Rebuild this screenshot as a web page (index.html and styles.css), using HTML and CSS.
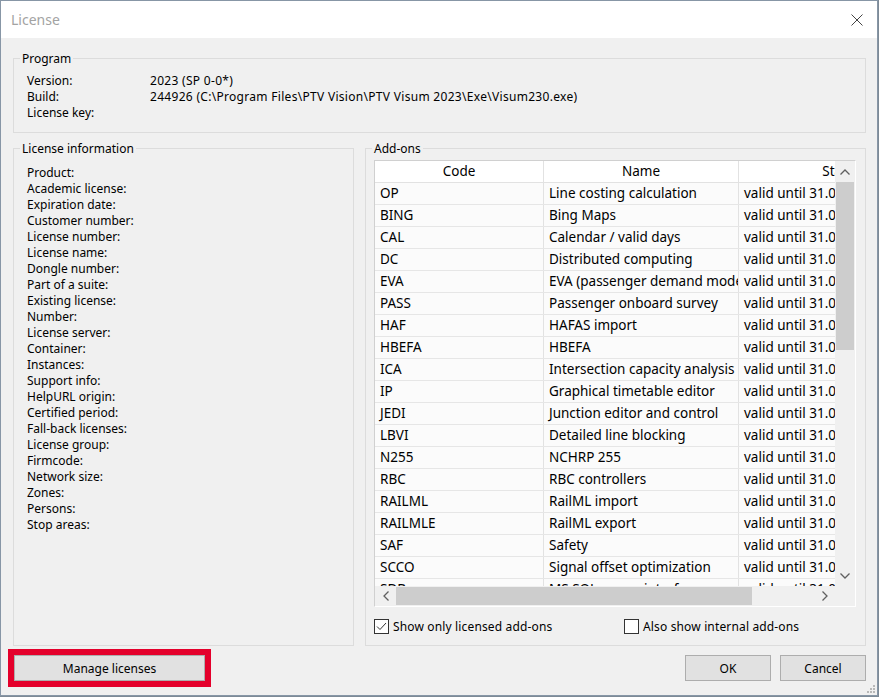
FILE: index.html
```html
<!DOCTYPE html>
<html lang="en">
<head>
<meta charset="utf-8">
<title>License</title>
<link rel="stylesheet" href="styles.css">
</head>
<body>
<div class="window">
  <div class="titlebar">
    <span class="title">License</span>
    <svg class="close" width="12" height="12" viewBox="0 0 12 12"><path d="M0.5 0.5 L11.5 11.5 M11.5 0.5 L0.5 11.5" stroke="#444" stroke-width="1" fill="none"/></svg>
  </div>
  <div class="content">
    <fieldset class="group program">
      <legend>Program</legend>
      <div class="group-body program-body">
        <span>Version:</span><span class="val">2023 (SP 0-0*)</span>
        <span>Build:</span><span class="val">244926 (C:\Program Files\PTV Vision\PTV Visum 2023\Exe\Visum230.exe)</span>
        <span>License key:</span><span class="val"></span>
      </div>
    </fieldset>
    <div class="middle">
      <fieldset class="group info">
        <legend>License information</legend>
        <div class="group-body info-body">
          <span>Product:</span>
          <span>Academic license:</span>
          <span>Expiration date:</span>
          <span>Customer number:</span>
          <span>License number:</span>
          <span>License name:</span>
          <span>Dongle number:</span>
          <span>Part of a suite:</span>
          <span>Existing license:</span>
          <span>Number:</span>
          <span>License server:</span>
          <span>Container:</span>
          <span>Instances:</span>
          <span>Support info:</span>
          <span>HelpURL origin:</span>
          <span>Certified period:</span>
          <span>Fall-back licenses:</span>
          <span>License group:</span>
          <span>Firmcode:</span>
          <span>Network size:</span>
          <span>Zones:</span>
          <span>Persons:</span>
          <span>Stop areas:</span>
        </div>
      </fieldset>
      <fieldset class="group addons">
        <legend>Add-ons</legend>
        <div class="group-body addons-body">
          <div class="listview">
            <div class="list-data">
              <div class="row header">
                <div class="cell c-code">Code</div>
                <div class="cell c-name">Name</div>
                <div class="cell c-status">Status</div>
              </div>
              <div class="row"><div class="cell c-code">OP</div><div class="cell c-name">Line costing calculation</div><div class="cell c-status">valid until 31.03.2024</div></div>
              <div class="row"><div class="cell c-code">BING</div><div class="cell c-name">Bing Maps</div><div class="cell c-status">valid until 31.03.2024</div></div>
              <div class="row"><div class="cell c-code">CAL</div><div class="cell c-name">Calendar / valid days</div><div class="cell c-status">valid until 31.03.2024</div></div>
              <div class="row"><div class="cell c-code">DC</div><div class="cell c-name">Distributed computing</div><div class="cell c-status">valid until 31.03.2024</div></div>
              <div class="row"><div class="cell c-code">EVA</div><div class="cell c-name">EVA (passenger demand model)</div><div class="cell c-status">valid until 31.03.2024</div></div>
              <div class="row"><div class="cell c-code">PASS</div><div class="cell c-name">Passenger onboard survey</div><div class="cell c-status">valid until 31.03.2024</div></div>
              <div class="row"><div class="cell c-code">HAF</div><div class="cell c-name">HAFAS import</div><div class="cell c-status">valid until 31.03.2024</div></div>
              <div class="row"><div class="cell c-code">HBEFA</div><div class="cell c-name">HBEFA</div><div class="cell c-status">valid until 31.03.2024</div></div>
              <div class="row"><div class="cell c-code">ICA</div><div class="cell c-name">Intersection capacity analysis</div><div class="cell c-status">valid until 31.03.2024</div></div>
              <div class="row"><div class="cell c-code">IP</div><div class="cell c-name">Graphical timetable editor</div><div class="cell c-status">valid until 31.03.2024</div></div>
              <div class="row"><div class="cell c-code">JEDI</div><div class="cell c-name">Junction editor and control</div><div class="cell c-status">valid until 31.03.2024</div></div>
              <div class="row"><div class="cell c-code">LBVI</div><div class="cell c-name">Detailed line blocking</div><div class="cell c-status">valid until 31.03.2024</div></div>
              <div class="row"><div class="cell c-code">N255</div><div class="cell c-name">NCHRP 255</div><div class="cell c-status">valid until 31.03.2024</div></div>
              <div class="row"><div class="cell c-code">RBC</div><div class="cell c-name">RBC controllers</div><div class="cell c-status">valid until 31.03.2024</div></div>
              <div class="row"><div class="cell c-code">RAILML</div><div class="cell c-name">RailML import</div><div class="cell c-status">valid until 31.03.2024</div></div>
              <div class="row"><div class="cell c-code">RAILMLE</div><div class="cell c-name">RailML export</div><div class="cell c-status">valid until 31.03.2024</div></div>
              <div class="row"><div class="cell c-code">SAF</div><div class="cell c-name">Safety</div><div class="cell c-status">valid until 31.03.2024</div></div>
              <div class="row"><div class="cell c-code">SCCO</div><div class="cell c-name">Signal offset optimization</div><div class="cell c-status">valid until 31.03.2024</div></div>
              <div class="row"><div class="cell c-code">SDB</div><div class="cell c-name">MS SQL server interface</div><div class="cell c-status">valid until 31.03.2024</div></div>
            </div>
            <div class="vscroll">
              <div class="arrow-btn"><svg width="10" height="6" viewBox="0 0 10 6"><path d="M0.5 5.5 L5 1 L9.5 5.5" stroke="#606060" stroke-width="1.3" fill="none"/></svg></div>
              <div class="vtrack"><div class="vthumb"></div></div>
              <div class="arrow-btn"><svg width="10" height="6" viewBox="0 0 10 6"><path d="M0.5 0.5 L5 5 L9.5 0.5" stroke="#606060" stroke-width="1.3" fill="none"/></svg></div>
            </div>
            <div class="hscroll">
              <div class="arrow-btn h"><svg width="6" height="10" viewBox="0 0 6 10"><path d="M5.5 0.5 L1 5 L5.5 9.5" stroke="#606060" stroke-width="1.3" fill="none"/></svg></div>
              <div class="htrack"><div class="hthumb"></div></div>
              <div class="arrow-btn h"><svg width="6" height="10" viewBox="0 0 6 10"><path d="M0.5 0.5 L5 5 L0.5 9.5" stroke="#606060" stroke-width="1.3" fill="none"/></svg></div>
            </div>
            <div class="corner"></div>
          </div>
          <div class="checks">
            <label class="check first">
              <span class="box"><svg width="13" height="13" viewBox="0 0 13 13"><path d="M2 6.5 L5 9.5 L11 3" stroke="#333" stroke-width="1" fill="none"/></svg></span>
              <span class="check-text">Show only licensed add-ons</span>
            </label>
            <label class="check">
              <span class="box"></span>
              <span class="check-text">Also show internal add-ons</span>
            </label>
          </div>
        </div>
      </fieldset>
    </div>
    <div class="footer">
      <span class="highlight"><button class="btn manage">Manage licenses</button></span>
      <div class="spacer"></div>
      <button class="btn small">OK</button>
      <button class="btn small">Cancel</button>
    </div>
  </div>
  <svg class="grip" width="9" height="9" viewBox="0 0 9 9">
    <rect x="6" y="0" width="2" height="2" fill="#b8b8b8"/>
    <rect x="3" y="3" width="2" height="2" fill="#b8b8b8"/>
    <rect x="6" y="3" width="2" height="2" fill="#b8b8b8"/>
    <rect x="0" y="6" width="2" height="2" fill="#b8b8b8"/>
    <rect x="3" y="6" width="2" height="2" fill="#b8b8b8"/>
    <rect x="6" y="6" width="2" height="2" fill="#b8b8b8"/>
  </svg>
</div>
</body>
</html>
```
FILE: styles.css
```css
* { box-sizing: border-box; }
html, body {
  margin: 0;
  padding: 0;
  background: #7d8a96;
  height: 697px;
  overflow: hidden;
}
body {
  font-family: "Noto Sans", "Open Sans", sans-serif;
  font-size: 12px;
  color: #000;
}
.window {
  position: relative;
  width: 878px;
  height: 696px;
  border: 1px solid #8796a6;
  background: #f0f0f0;
  display: flex;
  flex-direction: column;
}
.titlebar {
  height: 37px;
  background: #fff;
  display: flex;
  align-items: center;
  padding-left: 10px;
  padding-right: 14px;
  flex: none;
}
.title {
  font-size: 14px;
  color: #a3a3a3;
  flex: 1;
}
.close { display: block; }
.content {
  flex: 1;
  display: flex;
  flex-direction: column;
  padding: 11px 11px 8px 12px;
}
.group {
  margin: 0;
  padding: 0;
  min-width: 0;
  border: 1px solid #dcdcdc;
}
.group legend {
  margin-left: 6px;
  padding: 2px 2px 0;
  line-height: 16px;
  font-size: 12px;
}
.program-body {
  display: grid;
  grid-template-columns: 123px 1fr;
  grid-auto-rows: 16px;
  line-height: 16px;
  padding: 6px 10px 11px 13px;
  white-space: nowrap;
}
.val { letter-spacing: 0.3px; }
.middle {
  margin-top: 6px;
  height: 507px;
  display: grid;
  grid-template-columns: 341px 501px;
  column-gap: 11px;
  flex: none;
}
.info-body {
  display: flex;
  flex-direction: column;
  line-height: 16px;
  padding: 8px 0 0 13px;
}
.addons-body {
  padding: 3px 9px 0 8px;
}
.listview {
  height: 447px;
  border: 1px solid;
  border-color: #d0d0d0 #ffffff #ffffff #d0d0d0;
  display: grid;
  grid-template-columns: 460px 20px;
  grid-template-rows: 425px 20px;
  background: #fbfbfb;
}
.list-data {
  overflow: hidden;
  font-size: 13.5px;
}
.row {
  display: flex;
  height: 22px;
  line-height: 21px;
  border-bottom: 1px solid #e6e6e6;
  white-space: nowrap;
}
.row.header {
  background: #ffffff;
  border-bottom: 1px solid #e2e2e2;
}
.cell {
  flex: none;
  overflow: hidden;
  padding-left: 5px;
  border-right: 1px solid #e2e2e2;
}
.c-code { width: 169px; }
.c-name { width: 195px; }
.c-status { width: 206px; border-right: none; }
.header .cell { text-align: center; padding-left: 0; }
.vscroll {
  display: flex;
  flex-direction: column;
  background: #f0f0f0;
}
.arrow-btn {
  height: 21px;
  display: flex;
  align-items: center;
  justify-content: center;
  flex: none;
}
.vtrack {
  flex: 1;
  padding: 0 1px;
}
.vthumb {
  height: 168px;
  background: #cdcdcd;
}
.hscroll {
  display: flex;
  background: #f0f0f0;
}
.arrow-btn.h {
  height: auto;
  width: 21px;
}
.htrack {
  flex: 1;
  padding: 1px 0;
}
.hthumb {
  width: 356px;
  height: 100%;
  background: #cdcdcd;
}
.corner { background: #f0f0f0; }
.checks {
  display: flex;
  margin-top: 11px;
  height: 16px;
  align-items: center;
}
.check {
  display: flex;
  align-items: center;
  gap: 4px;
  font-size: 12px;
}
.check-text { letter-spacing: 0.15px; }
.check.first { width: 250px; }
.box {
  width: 15px;
  height: 15px;
  border: 1px solid #333;
  background: #fff;
  display: flex;
  align-items: center;
  justify-content: center;
}
.footer {
  margin-top: 3px;
  height: 38px;
  display: flex;
  align-items: center;
  margin-left: -5px;
}
.spacer { flex: 1; }
.highlight {
  display: block;
  border: 6px solid #e4002b;
}
.btn {
  font-family: inherit;
  font-size: 12px;
  height: 26px;
  background: #e1e1e1;
  border: 1px solid #adadad;
  color: #000;
  padding: 0;
  margin: 0;
  display: block;
}
.manage { width: 191px; }
.small { width: 86px; }
.small + .small { margin-left: 9px; }
.grip {
  position: absolute;
  right: 1px;
  bottom: 1px;
}
```
